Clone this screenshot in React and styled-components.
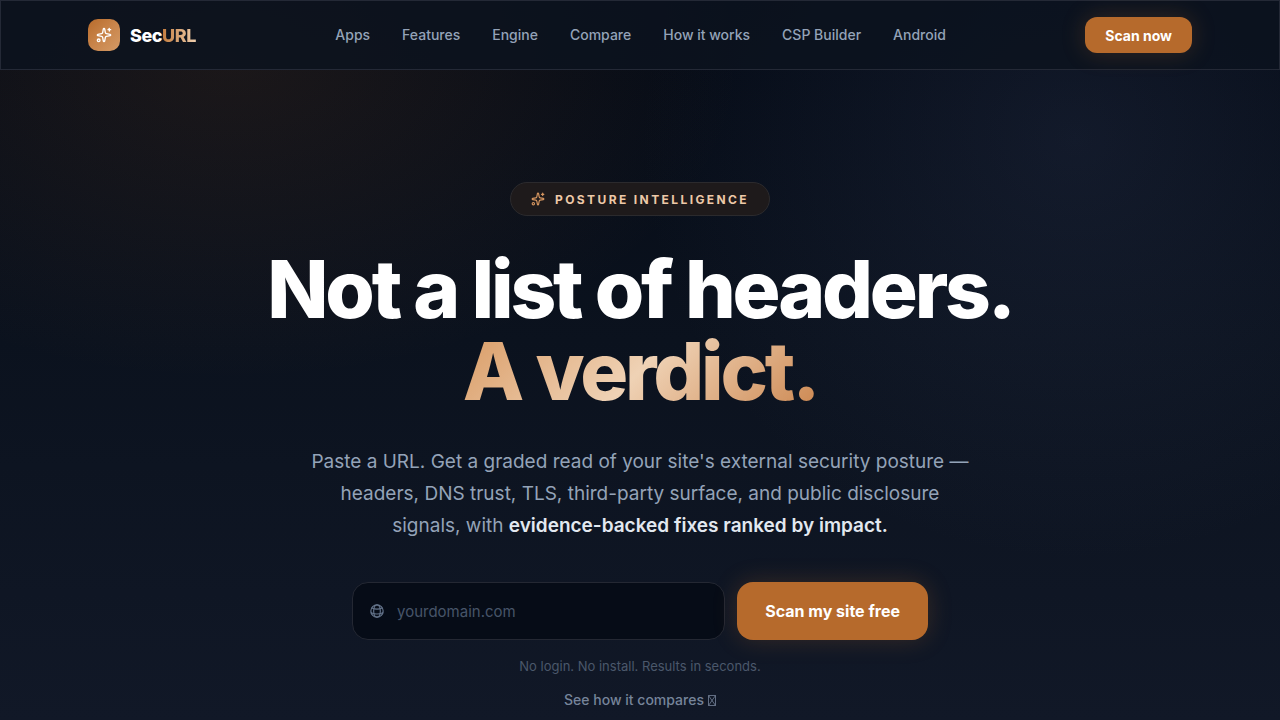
import React from 'react';
import styled, { createGlobalStyle } from 'styled-components';
import { Sparkles } from 'lucide-react';

const GlobalStyle = createGlobalStyle`
  *, *::before, *::after { box-sizing: border-box; }
  body {
    margin: 0;
    background: #101726;
    color: #fff;
    font-family: Inter, "Liberation Sans", sans-serif;
    -webkit-font-smoothing: antialiased;
  }
  button, input { font: inherit; }
  a { color: inherit; text-decoration: none; }
`;

const Page = styled.div`
  min-height: 100vh;
  overflow: hidden;
  background:
    radial-gradient(ellipse 40% 320px at 18% 60px, rgba(184, 107, 43, 0.12), transparent 100%),
    radial-gradient(ellipse 34% 420px at 84% 140px, rgba(72, 84, 124, 0.18), transparent 100%),
    linear-gradient(180deg, #040a15 0, #0b121e 340px, #111827 720px);
`;

const Header = styled.header`
  border: 1px solid #242936;
  background: rgba(12, 19, 31, 0.85);
`;

const HeaderInner = styled.div`
  display: flex;
  align-items: center;
  justify-content: space-between;
  max-width: 1152px;
  height: 68px;
  margin: 0 auto;
  padding: 0 24px;
`;

const Brand = styled.a`
  display: flex;
  align-items: center;
  gap: 10px;
  font-size: 18px;
  font-weight: 800;
  letter-spacing: -0.025em;
`;

const BrandMark = styled.span`
  display: grid;
  place-items: center;
  width: 32px;
  height: 32px;
  border-radius: 10px;
  background: linear-gradient(135deg, #b86b2b, #c9854b 50%, #d49a66);
`;

const BrandAccent = styled.span`
  background: linear-gradient(90deg, #c37c3e, #efcfae);
  background-clip: text;
  color: transparent;
`;

const Nav = styled.nav`
  display: flex;
  gap: 32px;
  color: #94a3b8;
  font-size: 14px;
  font-weight: 500;
  line-height: 20px;
`;

const ActionButton = styled.button`
  flex: none;
  height: ${({ $large }) => ($large ? 58 : 36)}px;
  padding: 0 ${({ $large }) => ($large ? 28 : 20)}px;
  border: 0;
  border-radius: ${({ $large }) => ($large ? 16 : 12)}px;
  background: #b66a2c;
  color: #fff;
  font-size: ${({ $large }) => ($large ? 16 : 14)}px;
  font-weight: 700;
  box-shadow: 0 0 24px rgba(184, 107, 43, 0.24);
  cursor: pointer;
`;

const Hero = styled.main`
  display: flex;
  flex-direction: column;
  align-items: center;
  padding: 112px 24px 0;
  text-align: center;
`;

const Pill = styled.div`
  display: flex;
  align-items: center;
  gap: 10px;
  height: 34px;
  padding: 0 20px;
  border: 1px solid #2b2a2d;
  border-radius: 17px;
  background: #1e1a1b;
  color: #edc9a8;
  font-size: 12px;
  font-weight: 700;
  letter-spacing: 0.2em;
  svg { color: #d69660; }
`;

const Title = styled.h1`
  margin: 32px 0 0;
  font-size: 80px;
  font-weight: 800;
  line-height: 82px;
  letter-spacing: -0.04em;
`;

const Verdict = styled.span`
  display: table;
  margin: 0 auto;
  background: linear-gradient(135deg, #d99b65, #efd2b5 50%, #cc8750);
  background-clip: text;
  color: transparent;
`;

const Lead = styled.p`
  max-width: 668px;
  margin: 34px 0 0;
  color: #94a3b8;
  font-size: 19px;
  line-height: 32px;
  strong { color: #e2e8f0; font-weight: 600; }
`;

const ScanForm = styled.form`
  display: flex;
  gap: 12px;
  width: 100%;
  max-width: 576px;
  margin-top: 40px;
`;

const Field = styled.label`
  display: flex;
  flex: 1;
  align-items: center;
  gap: 12px;
  min-width: 0;
  height: 58px;
  padding: 0 16px;
  border: 1px solid #242833;
  border-radius: 16px;
  background: #060c17;
  color: #64748b;
`;

const DomainInput = styled.input`
  flex: 1;
  min-width: 0;
  padding: 0;
  border: 0;
  outline: 0;
  background: transparent;
  color: #fff;
  font-size: 15px;
  &::placeholder { color: #475569; opacity: 1; }
`;

const Note = styled.p`
  margin: 16px 0 0;
  color: #4b586b;
  font-size: 13px;
  line-height: 20px;
`;

const CompareLink = styled.a`
  display: flex;
  align-items: center;
  gap: 4px;
  margin-top: 14px;
  padding-bottom: 10px;
  color: #76849a;
  font-size: 14px;
  font-weight: 500;
  line-height: 20px;
`;

const links = ['Apps', 'Features', 'Engine', 'Compare', 'How it works', 'CSP Builder', 'Android'];

function Globe() {
  return (
    <svg width="16" height="16" viewBox="0 0 24 24" fill="none" stroke="currentColor" strokeWidth="1.75" strokeLinecap="round" strokeLinejoin="round" aria-hidden="true">
      <circle cx="12" cy="12" r="9.25" />
      <ellipse cx="12" cy="12" rx="5" ry="9.25" />
      <path d="M4.500 7.500c2.200 1.200 4.700 1.800 7.500 1.800s5.300-.6 7.500-1.800M3.200 14.500c2.600 1.300 5.500 2 8.800 2s6.200-.7 8.800-2" />
    </svg>
  );
}

function CrossedBox() {
  return (
    <svg width="8" height="12" viewBox="0 0 8 12" fill="none" stroke="currentColor" strokeWidth="0.8" aria-hidden="true">
      <path d="M.5 1.5h7v10h-7zM.5 1.5l7 10M7.5 1.5l-7 10" />
    </svg>
  );
}

export default function App() {
  return (
    <Page>
      <GlobalStyle />
      <Header>
        <HeaderInner>
          <Brand href="#">
            <BrandMark><Sparkles size={16} /></BrandMark>
            <span>Sec<BrandAccent>URL</BrandAccent></span>
          </Brand>
          <Nav>
            {links.map((label) => <a href="#" key={label}>{label}</a>)}
          </Nav>
          <ActionButton type="button">Scan now</ActionButton>
        </HeaderInner>
      </Header>
      <Hero>
        <Pill><Sparkles size={14} />POSTURE INTELLIGENCE</Pill>
        <Title>Not a list of headers.<Verdict>A verdict.</Verdict></Title>
        <Lead>
          Paste a URL. Get a graded read of your site's external security posture — headers, DNS trust, TLS, third-party surface, and public disclosure signals, with <strong>evidence-backed fixes ranked by impact.</strong>
        </Lead>
        <ScanForm onSubmit={(event) => event.preventDefault()}>
          <Field>
            <Globe />
            <DomainInput type="text" placeholder="yourdomain.com" aria-label="Your domain" />
          </Field>
          <ActionButton type="submit" $large>Scan my site free</ActionButton>
        </ScanForm>
        <Note>No login. No install. Results in seconds.</Note>
        <CompareLink href="#">See how it compares <CrossedBox /></CompareLink>
      </Hero>
    </Page>
  );
}
